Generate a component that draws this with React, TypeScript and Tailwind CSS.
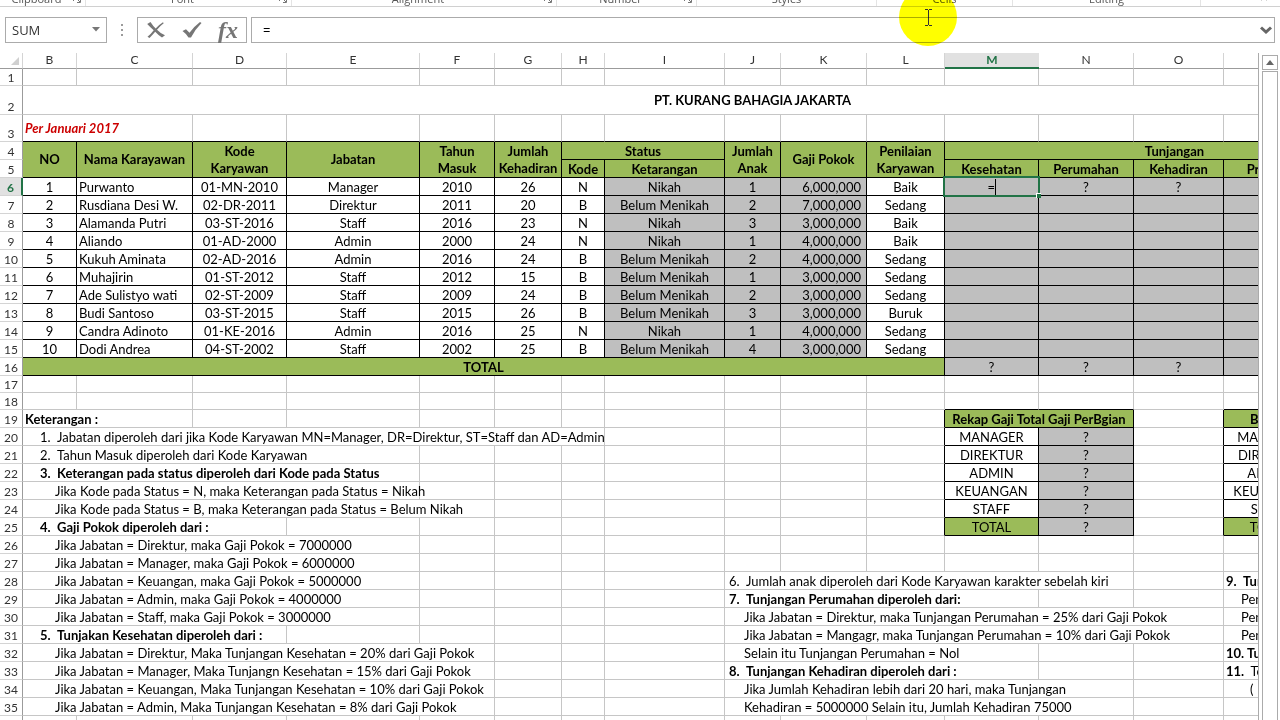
import type { ReactNode } from "react";
import clsx from "clsx";

const COLUMNS = [
  { name: "B", width: "w-[54px]" },
  { name: "C", width: "w-[116px]" },
  { name: "D", width: "w-[94px]" },
  { name: "E", width: "w-[133px]" },
  { name: "F", width: "w-[75px]" },
  { name: "G", width: "w-[67px]" },
  { name: "H", width: "w-[43px]" },
  { name: "I", width: "w-[120px]" },
  { name: "J", width: "w-[56px]" },
  { name: "K", width: "w-[86px]" },
  { name: "L", width: "w-[78px]" },
  { name: "M", width: "w-[94px]" },
  { name: "N", width: "w-[95px]" },
  { name: "O", width: "w-[90px]" },
  { name: "P", width: "w-[92px]" },
  { name: "Q", width: "w-[89px]" },
  { name: "R", width: "w-[78px]" },
];

const NAMES = COLUMNS.map((column) => column.name).join("");
const LAST_ROW = 36;

// Ranges drawn with black cell borders
const BOXES = [
  { top: 4, bottom: 16, left: "B", right: "Q" },
  { top: 19, bottom: 25, left: "M", right: "N" },
  { top: 19, bottom: 25, left: "P", right: "Q" },
];

const GREEN = "bg-[#9bbb59]";
const GRAY = "bg-[#bfbfbf]";
const HEAD = clsx(GREEN, "text-center font-bold whitespace-pre-line");

interface CellSpec {
  col: string;
  span?: number;
  rows?: number;
  body?: ReactNode;
  className?: string;
}

const EMPLOYEES = [
  ["1", "Purwanto", "01-MN-2010", "Manager", "2010", "26", "N", "Nikah", "1", "6,000,000", "Baik"],
  ["2", "Rusdiana Desi W.", "02-DR-2011", "Direktur", "2011", "20", "B", "Belum Menikah", "2", "7,000,000", "Sedang"],
  ["3", "Alamanda Putri", "03-ST-2016", "Staff", "2016", "23", "N", "Nikah", "3", "3,000,000", "Baik"],
  ["4", "Aliando", "01-AD-2000", "Admin", "2000", "24", "N", "Nikah", "1", "4,000,000", "Baik"],
  ["5", "Kukuh Aminata", "02-AD-2016", "Admin", "2016", "24", "B", "Belum Menikah", "2", "4,000,000", "Sedang"],
  ["6", "Muhajirin", "01-ST-2012", "Staff", "2012", "15", "B", "Belum Menikah", "1", "3,000,000", "Sedang"],
  ["7", "Ade Sulistyo wati", "02-ST-2009", "Staff", "2009", "24", "B", "Belum Menikah", "2", "3,000,000", "Sedang"],
  ["8", "Budi Santoso", "03-ST-2015", "Staff", "2015", "26", "B", "Belum Menikah", "3", "3,000,000", "Buruk"],
  ["9", "Candra Adinoto", "01-KE-2016", "Admin", "2016", "25", "N", "Nikah", "1", "4,000,000", "Sedang"],
  ["10", "Dodi Andrea", "04-ST-2002", "Staff", "2002", "25", "B", "Belum Menikah", "4", "3,000,000", "Sedang"],
];

function ActiveCell() {
  return (
    <>
      <div className="flex h-4 items-center justify-center">
        <input
          aria-label="Cell M6"
          defaultValue="="
          className="h-4 w-2 border-r border-black bg-transparent p-0 outline-none"
        />
      </div>
      <div className="pointer-events-none absolute -inset-x-0.5 -inset-y-0.5 border-2 border-[#217346]" />
      <div className="absolute -right-[3px] -bottom-[3px] size-[5px] border-t border-l border-white bg-[#217346]" />
    </>
  );
}

function numbered(col: string, span: number, no: string, text: string, bold = false): CellSpec {
  return {
    col,
    span,
    className: clsx(col === "B" ? "pl-[17px]" : col === "J" ? "pl-1" : "pl-[2px]", bold && "font-bold"),
    body: (
      <>
        <span className="inline-block w-[17px]">{no}</span>
        {text}
      </>
    ),
  };
}

function detail(col: string, span: number, text: string): CellSpec {
  return { col, span, className: col === "B" ? "pl-8" : col === "J" ? "pl-[19px]" : "pl-[17px]", body: text };
}

const recapLabel = (col: string, text: string, className: string): CellSpec => ({
  col,
  body: text,
  className: clsx("text-center", className),
});
const unknown = (col: string): CellSpec => ({ col, body: "?", className: clsx(GRAY, "text-center") });
const gray = (col: string): CellSpec => ({ col, className: GRAY });

const SHEET: Record<number, CellSpec[]> = {
  2: [{ col: "B", span: 17, body: "PT. KURANG BAHAGIA JAKARTA", className: "text-center font-bold" }],
  3: [{ col: "B", span: 2, body: "Per Januari 2017", className: "pl-[2px] font-bold italic text-[#cc0000]" }],
  4: [
    { col: "B", rows: 2, body: "NO", className: HEAD },
    { col: "C", rows: 2, body: "Nama Karayawan", className: HEAD },
    { col: "D", rows: 2, body: "Kode\nKaryawan", className: HEAD },
    { col: "E", rows: 2, body: "Jabatan", className: HEAD },
    { col: "F", rows: 2, body: "Tahun\nMasuk", className: HEAD },
    { col: "G", rows: 2, body: "Jumlah\nKehadiran", className: HEAD },
    { col: "H", span: 2, body: "Status", className: HEAD },
    { col: "J", rows: 2, body: "Jumlah\nAnak", className: HEAD },
    { col: "K", rows: 2, body: "Gaji Pokok", className: HEAD },
    { col: "L", rows: 2, body: "Penilaian\nKaryawan", className: HEAD },
    { col: "M", span: 5, body: "Tunjangan", className: HEAD },
  ],
  5: [
    { col: "H", body: "Kode", className: HEAD },
    { col: "I", body: "Ketarangan", className: HEAD },
    { col: "M", body: "Kesehatan", className: HEAD },
    { col: "N", body: "Perumahan", className: HEAD },
    { col: "O", body: "Kehadiran", className: HEAD },
    { col: "P", body: "Prestasi", className: HEAD },
    { col: "Q", className: HEAD },
  ],
  16: [
    { col: "B", span: 11, body: "TOTAL", className: HEAD },
    unknown("M"),
    unknown("N"),
    unknown("O"),
    gray("P"),
    gray("Q"),
  ],
  19: [
    { col: "B", span: 2, body: "Keterangan :", className: "pl-[2px] font-bold" },
    { col: "M", span: 2, body: "Rekap Gaji Total Gaji PerBgian", className: clsx(GREEN, "text-center font-bold") },
    { col: "P", body: "Bagian", className: clsx(GREEN, "text-center font-bold") },
    { col: "Q", className: GREEN },
  ],
  20: [
    numbered("B", 7, "1.", "Jabatan diperoleh dari jika Kode Karyawan MN=Manager, DR=Direktur, ST=Staff dan AD=Admin"),
  ],
  21: [numbered("B", 4, "2.", "Tahun Masuk diperoleh dari Kode Karyawan")],
  22: [numbered("B", 4, "3.", "Keterangan pada status diperoleh dari Kode pada Status", true)],
  23: [detail("B", 4, "Jika Kode pada Status = N, maka Keterangan pada Status = Nikah")],
  24: [detail("B", 5, "Jika Kode pada Status = B, maka Keterangan pada Status = Belum Nikah")],
  25: [numbered("B", 3, "4.", "Gaji Pokok diperoleh dari :", true)],
  26: [detail("B", 4, "Jika Jabatan = Direktur, maka Gaji Pokok = 7000000")],
  27: [detail("B", 4, "Jika Jabatan = Manager, maka Gaji Pokok = 6000000")],
  28: [
    detail("B", 4, "Jika Jabatan = Keuangan, maka Gaji Pokok = 5000000"),
    numbered("J", 5, "6.", "Jumlah anak diperoleh dari Kode Karyawan karakter sebelah kiri"),
    numbered("P", 2, "9.", "Tunjangan", true),
  ],
  29: [
    detail("B", 4, "Jika Jabatan = Admin, maka Gaji Pokok = 4000000"),
    numbered("J", 4, "7.", "Tunjangan Perumahan diperoleh dari:", true),
    detail("P", 2, "Penilaian"),
  ],
  30: [
    detail("B", 4, "Jika Jabatan = Staff, maka Gaji Pokok = 3000000"),
    detail("J", 6, "Jika Jabatan = Direktur, maka Tunjangan Perumahan = 25% dari Gaji Pokok"),
    detail("P", 2, "Penilaian"),
  ],
  31: [
    numbered("B", 3, "5.", "Tunjakan Kesehatan diperoleh dari :", true),
    detail("J", 6, "Jika Jabatan = Mangagr, maka Tunjangan Perumahan = 10% dari Gaji Pokok"),
    detail("P", 2, "Penilaian"),
  ],
  32: [
    detail("B", 5, "Jika Jabatan = Direktur, Maka Tunjangan Kesehatan = 20% dari Gaji Pokok"),
    detail("J", 4, "Selain itu Tunjangan Perumahan = Nol"),
    { col: "P", span: 2, body: "10. Tunjangan", className: "pl-[2px] font-bold" },
  ],
  33: [
    detail("B", 5, "Jika Jabatan = Manager, Maka Tunjangn Kesehatan = 15% dari Gaji Pokok"),
    numbered("J", 4, "8.", "Tunjangan Kehadiran diperoleh dari :", true),
    {
      col: "P",
      span: 2,
      className: "pl-[2px]",
      body: (
        <>
          <b>11.</b>&nbsp; Total
        </>
      ),
    },
  ],
  34: [
    detail("B", 5, "Jika Jabatan = Keuangan, Maka Tunjangan Kesehatan = 10% dari Gaji Pokok"),
    detail("J", 5, "Jika Jumlah Kehadiran lebih dari 20 hari, maka Tunjangan"),
    { col: "P", span: 2, body: "(", className: "pl-[26px]" },
  ],
  35: [
    detail("B", 5, "Jika Jabatan = Admin, Maka Tunjangan Kesehatan = 8% dari Gaji Pokok"),
    detail("J", 5, "Kehadiran = 5000000 Selain itu, Jumlah Kehadiran 75000"),
  ],
};

EMPLOYEES.forEach((employee, index) => {
  const row = index + 6;
  const cells: CellSpec[] = employee.map((value, i) => ({
    col: NAMES[i],
    body: value,
    className: clsx(
      i === 1 ? "pl-[2px]" : i === 9 ? "pr-[5px] text-right" : "text-center",
      i >= 7 && i <= 9 && GRAY,
    ),
  }));
  if (row === 6) {
    cells.push({ col: "M", body: <ActiveCell />, className: clsx(GRAY, "relative z-10") });
    cells.push(unknown("N"), unknown("O"));
  } else {
    cells.push(gray("M"), gray("N"), gray("O"));
  }
  cells.push(gray("P"), gray("Q"));
  SHEET[row] = cells;
});

["MANAGER", "DIREKTUR", "ADMIN", "KEUANGAN", "STAFF", "TOTAL"].forEach((label, index) => {
  const fill = label === "TOTAL" ? GREEN : "bg-white";
  SHEET[index + 20].push(recapLabel("M", label, fill), unknown("N"), recapLabel("P", label, fill), gray("Q"));
});

function isBoxed(row: number, col: number) {
  return BOXES.some(
    (box) =>
      row >= box.top && row <= box.bottom && col >= NAMES.indexOf(box.left) && col <= NAMES.indexOf(box.right),
  );
}

// Fills the gaps between the listed cells with blank ones
function layoutRow(row: number) {
  const specs = SHEET[row] ?? [];
  const cells: CellSpec[] = [];
  let col = 0;
  while (col < NAMES.length) {
    const spec = specs.find((item) => item.col === NAMES[col]);
    const covered = row === 5 && SHEET[4].some((item) => item.col === NAMES[col] && item.rows === 2);
    if (spec) cells.push(spec);
    else if (!covered) cells.push({ col: NAMES[col] });
    col += spec?.span ?? 1;
  }
  return cells;
}

function rowHeight(row: number) {
  if (row === 2) return "h-[29px]";
  if (row === 3) return "h-[27px]";
  if (row === 1 || row === 17 || row === 18) return "h-[17px]";
  return "h-[18px]";
}

function SheetRow({ row }: { row: number }) {
  const active = row === 6;
  return (
    <tr className={rowHeight(row)}>
      <th
        scope="row"
        className={clsx(
          "border-b border-b-[#d4d4d4] p-0 text-center align-bottom text-xs leading-[15px]",
          active
            ? "border-r-2 border-r-[#217346] bg-[#e1e1e1] font-bold text-[#217346]"
            : "border-r border-r-[#9b9b9b] font-normal text-[#333333]",
        )}>
        {row}
      </th>
      {layoutRow(row).map((cell) => {
        const start = NAMES.indexOf(cell.col);
        const end = start + (cell.span ?? 1) - 1;
        const bottom = row + (cell.rows ?? 1) - 1;
        const blackRight = isBoxed(row, end) || isBoxed(row, end + 1);
        const blackBottom = isBoxed(bottom, start) || isBoxed(bottom + 1, start);
        return (
          <td
            key={cell.col}
            colSpan={cell.span}
            rowSpan={cell.rows}
            className={clsx(
              "border-r border-b px-0 pb-0 align-middle",
              cell.rows ? "pt-0 leading-[17px]" : row === 2 || row === 3 ? "pt-0 leading-4" : "pt-px leading-4",
              blackRight ? "border-r-black" : "border-r-[#c6c6c6]",
              blackBottom ? "border-b-black" : "border-b-[#c6c6c6]",
              cell.className,
            )}>
            {cell.body}
          </td>
        );
      })}
    </tr>
  );
}

function Sheet() {
  return (
    <table className="w-px table-fixed border-separate border-spacing-0 text-[13px] whitespace-nowrap text-black">
      <colgroup>
        <col className="w-[23px]" />
        {COLUMNS.map((column) => (
          <col
            key={column.name}
            className={column.width}
          />
        ))}
      </colgroup>
      <thead>
        <tr className="h-4">
          <th className="border-r border-b border-r-[#d4d4d4] border-b-[#9b9b9b] p-0 align-bottom">
            <svg
              viewBox="0 0 10 10"
              className="mr-[3px] mb-[3px] ml-auto size-2"
              aria-hidden>
              <path
                d="M10 0V10H0Z"
                fill="#d0d0d0"
              />
            </svg>
          </th>
          {COLUMNS.map(({ name }) => (
            <th
              key={name}
              scope="col"
              className={clsx(
                "p-0 text-center align-top text-xs leading-[14px]",
                name === "M"
                  ? "border-b-2 border-b-[#217346] bg-[#e1e1e1] font-bold text-[#217346]"
                  : "border-r border-b border-r-[#d4d4d4] border-b-[#9b9b9b] font-normal text-[#333333]",
              )}>
              {name}
            </th>
          ))}
        </tr>
      </thead>
      <tbody>
        {Array.from({ length: LAST_ROW }, (_, i) => (
          <SheetRow
            key={i + 1}
            row={i + 1}
          />
        ))}
      </tbody>
    </table>
  );
}

const RIBBON_GROUPS = [
  { label: "Clipboard", width: "w-[86px]", launcher: true },
  { label: "Font", width: "w-[206px]", launcher: true },
  { label: "Alignment", width: "w-[265px]", launcher: true },
  { label: "Number", width: "w-[140px]", launcher: true },
  { label: "Styles", width: "w-[180px]", launcher: false },
  { label: "Cells", width: "w-[136px]", launcher: false },
  { label: "Editing", width: "w-[188px]", launcher: false },
];

// Only the lower edge of the ribbon's group captions is in view
function Ribbon() {
  return (
    <div className="flex h-[7px] shrink-0 items-end overflow-hidden border-b border-[#d0d0d0] font-['Open_Sans',sans-serif] text-[11px] text-[#555555]">
      {RIBBON_GROUPS.map(({ label, width, launcher }) => (
        <div
          key={label}
          className={clsx("flex h-[14px] shrink-0 items-center border-r border-[#e4e4e4]", width)}>
          <span className="flex-1 text-center leading-[14px]">{label}</span>
          {launcher && (
            <svg
              viewBox="0 0 8 8"
              className="mr-1 size-2"
              fill="none"
              stroke="#777777"
              aria-hidden>
              <path d="M.5 6V.5H6M3 3L7 7M7.5 4V7.5H4" />
            </svg>
          )}
        </div>
      ))}
      <svg
        viewBox="0 0 8 8"
        className="mr-3 mb-1 ml-auto size-2"
        fill="none"
        stroke="#666666"
        strokeWidth="1.5"
        aria-hidden>
        <path d="M1 6L4 3L7 6" />
      </svg>
    </div>
  );
}

function FormulaBar() {
  return (
    <div className="flex h-[46px] shrink-0 items-center pr-[5px] pl-[5px] font-['Open_Sans',sans-serif] text-[13px] text-[#333333]">
      <div className="flex h-[26px] w-[102px] items-center border border-[#ababab]">
        <input
          aria-label="Name box"
          defaultValue="SUM"
          className="w-full min-w-0 flex-1 pt-px pl-1.5 outline-none"
        />
        <button
          type="button"
          aria-label="Show names"
          className="px-1.5">
          <svg
            viewBox="0 0 8 5"
            className="mb-0.5 h-[5px] w-2"
            aria-hidden>
            <path
              d="M0 0H8L4 4.5Z"
              fill="#777777"
            />
          </svg>
        </button>
      </div>
      <div className="flex w-[30px] flex-col items-center gap-[3px]">
        <span className="size-0.5 bg-[#9b9b9b]" />
        <span className="size-0.5 bg-[#9b9b9b]" />
        <span className="size-0.5 bg-[#9b9b9b]" />
      </div>
      <div className="mr-1 flex h-[26px] w-[110px] items-center justify-between border border-[#ababab] px-2">
        <button
          type="button"
          aria-label="Cancel">
          <svg
            viewBox="0 0 20 18"
            className="h-[18px] w-5"
            aria-hidden>
            <path
              d="M1.200 3L4.500 1Q7 5 9.700 7.600Q13 3.500 17 1.200L17.700 2.200Q14 5 11 8.700Q14 12 19 14.200L16 16.500Q12 14 9.200 10.800Q6.500 14 3.500 17L1.500 15.800Q5 13 7.700 9.300Q4 6 1.200 3Z"
              fill="#767676"
            />
          </svg>
        </button>
        <button
          type="button"
          aria-label="Enter">
          <svg
            viewBox="0 0 20 18"
            className="h-[18px] w-5"
            aria-hidden>
            <path
              d="M0.500 10L4 8.200L7.500 11.800Q12 5.500 18 1L19.500 2Q13 8.500 9 16.500H6.500Q4 12.500 0.500 10Z"
              fill="#767676"
            />
          </svg>
        </button>
        <button
          type="button"
          aria-label="Insert function"
          className="font-['Liberation_Serif',serif] text-2xl leading-6 font-bold text-[#767676] italic">
          fx
        </button>
      </div>
      <div className="flex h-[26px] min-w-0 flex-1 items-center border border-[#ababab]">
        <input
          aria-label="Formula"
          defaultValue="="
          className="min-w-0 flex-1 pt-px pl-[11px] text-black outline-none"
        />
        <button
          type="button"
          aria-label="Expand formula bar"
          className="px-0.5">
          <svg
            viewBox="0 0 12 8"
            className="h-2 w-3"
            fill="none"
            stroke="#666666"
            strokeWidth="3"
            aria-hidden>
            <path d="M1 1.500L6 6L11 1.500" />
          </svg>
        </button>
      </div>
    </div>
  );
}

function ScrollBar() {
  return (
    <div className="mr-0.5 ml-[3px] flex w-4 shrink-0 flex-col gap-px pt-0.5">
      <button
        type="button"
        aria-label="Scroll up"
        className="flex h-[15px] w-4 items-center justify-center border border-[#ababab]">
        <svg
          viewBox="0 0 8 5"
          className="h-[5px] w-2"
          aria-hidden>
          <path
            d="M4 0L8 5H0Z"
            fill="#666666"
          />
        </svg>
      </button>
      <div className="flex-1 border-x border-t border-[#ababab]" />
    </div>
  );
}

// Highlighted text cursor resting over the formula bar
function Pointer() {
  return (
    <div className="pointer-events-none absolute -top-3 left-[899px] flex size-[58px] items-center justify-center rounded-full bg-[#ffff00] mix-blend-multiply">
      <svg
        viewBox="0 0 7 17"
        className="h-[17px] w-[7px]"
        fill="none"
        stroke="#333333"
        aria-hidden>
        <path d="M0 .5H3M4 .5H7M3.500 1V16M0 16.500H3M4 16.500H7" />
      </svg>
    </div>
  );
}

export default function App() {
  return (
    <div className="relative flex h-screen flex-col overflow-hidden bg-white font-['Lato',sans-serif]">
      <Ribbon />
      <FormulaBar />
      <main className="flex min-h-0 flex-1">
        <div className="relative min-w-0 flex-1 overflow-hidden border-r border-[#ababab]">
          <Sheet />
        </div>
        <ScrollBar />
      </main>
      <Pointer />
    </div>
  );
}
